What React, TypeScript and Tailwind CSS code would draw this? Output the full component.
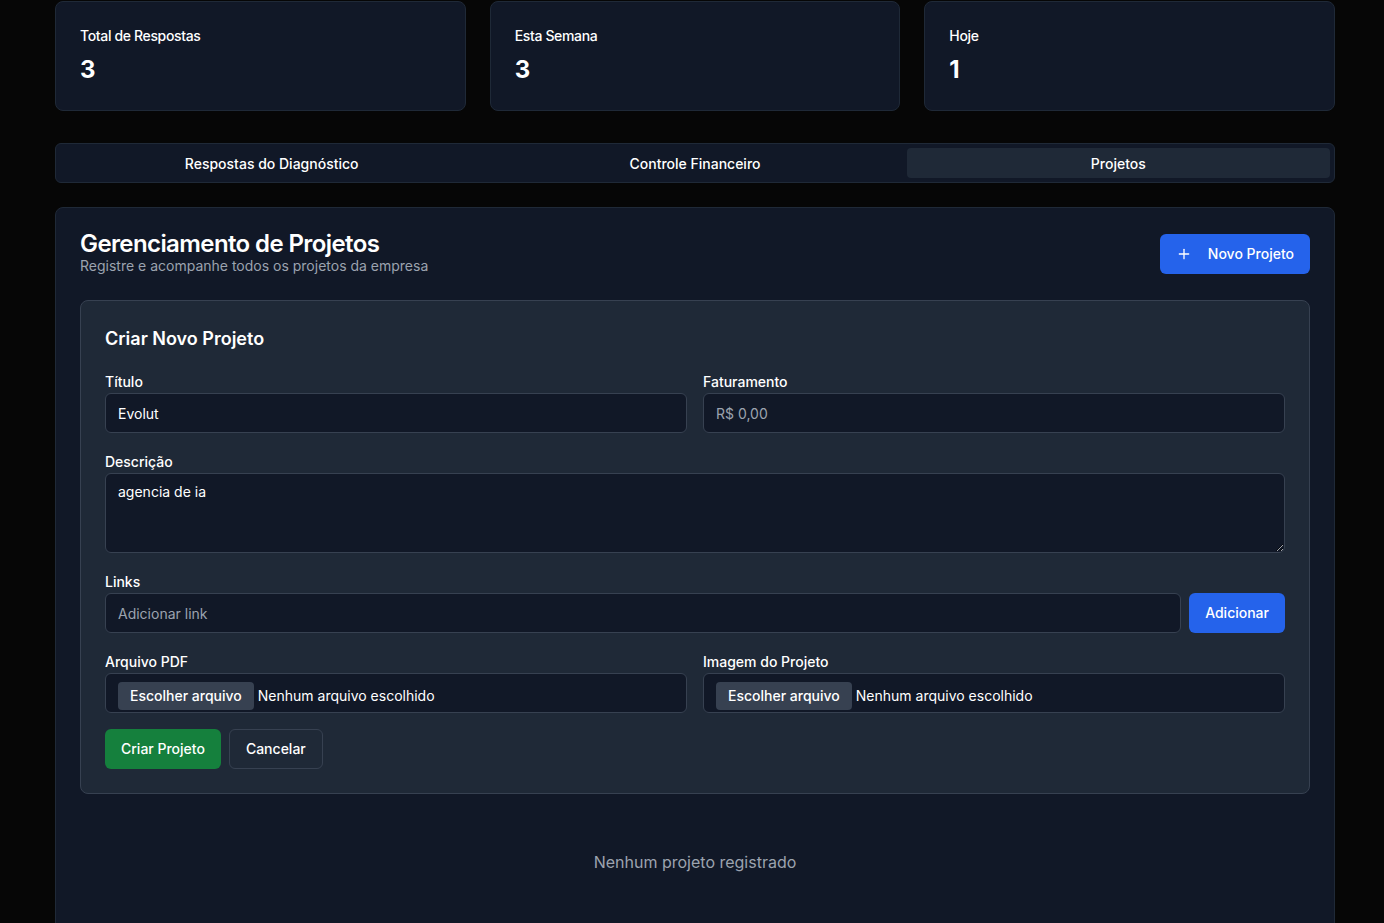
import { Plus } from "lucide-react";

const stats = [
  { label: "Total de Respostas", value: "3" },
  { label: "Esta Semana", value: "3" },
  { label: "Hoje", value: "1" },
];

const tabs = ["Respostas do Diagnóstico", "Controle Financeiro", "Projetos"];

function Field({ label, children }: { label: string; children: React.ReactNode }) {
  return (
    <div className="flex flex-col">
      <label className="mb-px block text-sm font-medium leading-5 text-white">{label}</label>
      {children}
    </div>
  );
}

function FileBox() {
  return (
    <div className="flex h-10 items-start rounded-md border border-[#374151] bg-[#111827] pl-3 pt-2">
      <div className="flex h-7 items-center">
        <span className="flex h-7 items-center rounded bg-[#374151] px-3 text-sm font-medium text-white">
          Escolher arquivo
        </span>
        <span className="ml-1 text-sm text-white">Nenhum arquivo escolhido</span>
      </div>
    </div>
  );
}

const inputCls =
  "h-10 w-full rounded-md border border-[#374151] bg-[#111827] px-3 text-sm text-white placeholder:text-[#9ca3af] outline-none";

export default function App() {
  return (
    <div className="min-h-screen bg-[#060606] pl-[55px] pr-[49px] pt-px font-['Inter',sans-serif] text-white">
      <div className="grid grid-cols-3 gap-6">
        {stats.map((s) => (
          <div key={s.label} className="rounded-lg border border-[#1f2937] bg-[#111827] px-6 pb-6 pt-6">
            <p className="text-sm font-medium leading-5 tracking-tight">{s.label}</p>
            <p className="mt-2 text-2xl font-bold leading-8">{s.value}</p>
          </div>
        ))}
      </div>

      <div className="mt-8 grid h-10 grid-cols-3 rounded-md border border-[#1f2937] bg-[#111827] p-1">
        {tabs.map((t, i) => (
          <div
            key={t}
            className={`flex items-center justify-center rounded-sm pt-px text-sm font-medium ${
              i === 2 ? "bg-[#1f2937]" : ""
            }`}
          >
            {t}
          </div>
        ))}
      </div>

      <div className="mt-6 rounded-lg border border-[#1f2937] bg-[#111827] px-6 pb-16 pt-6">
        <div className="flex items-center justify-between">
          <div>
            <h2 className="text-2xl font-semibold leading-none tracking-tight">Gerenciamento de Projetos</h2>
            <p className="text-sm leading-5 text-[#9ca3af]">
              Registre e acompanhe todos os projetos da empresa
            </p>
          </div>
          <button className="flex h-10 items-center gap-4 rounded-md bg-[#2563eb] px-4 text-sm font-medium text-white">
            <Plus className="h-4 w-4" />
            Novo Projeto
          </button>
        </div>

        <div className="mt-6 rounded-lg border border-[#374151] bg-[#1f2937] p-6">
          <h3 className="text-lg font-semibold leading-7">Criar Novo Projeto</h3>
          <div className="mt-[19px] flex flex-col gap-[19px]">
            <div className="grid grid-cols-2 gap-4">
              <Field label="Título">
                <input className={inputCls} defaultValue="Evolut" />
              </Field>
              <Field label="Faturamento">
                <input className={inputCls} placeholder="R$ 0,00" />
              </Field>
            </div>
            <Field label="Descrição">
              <textarea
                className="h-20 w-full rounded-md border border-[#374151] bg-[#111827] px-3 py-2 text-sm text-white outline-none"
                defaultValue="agencia de ia"
              />
            </Field>
            <Field label="Links">
              <div className="flex gap-2">
                <input className={inputCls} placeholder="Adicionar link" />
                <button className="h-10 shrink-0 rounded-md bg-[#2563eb] px-4 text-sm font-medium text-white">
                  Adicionar
                </button>
              </div>
            </Field>
            <div className="grid grid-cols-2 gap-4">
              <Field label="Arquivo PDF">
                <FileBox />
              </Field>
              <Field label="Imagem do Projeto">
                <FileBox />
              </Field>
            </div>
          </div>
          <div className="mt-4 flex gap-2">
            <button className="h-10 rounded-md bg-[#15803d] px-4 text-sm font-medium text-white">
              Criar Projeto
            </button>
            <button className="h-10 rounded-md border border-[#374151] px-4 text-sm font-medium text-white">
              Cancelar
            </button>
          </div>
        </div>

        <p className="mt-14 text-center text-base leading-6 text-[#9ca3af]">Nenhum projeto registrado</p>
      </div>
    </div>
  );
}
